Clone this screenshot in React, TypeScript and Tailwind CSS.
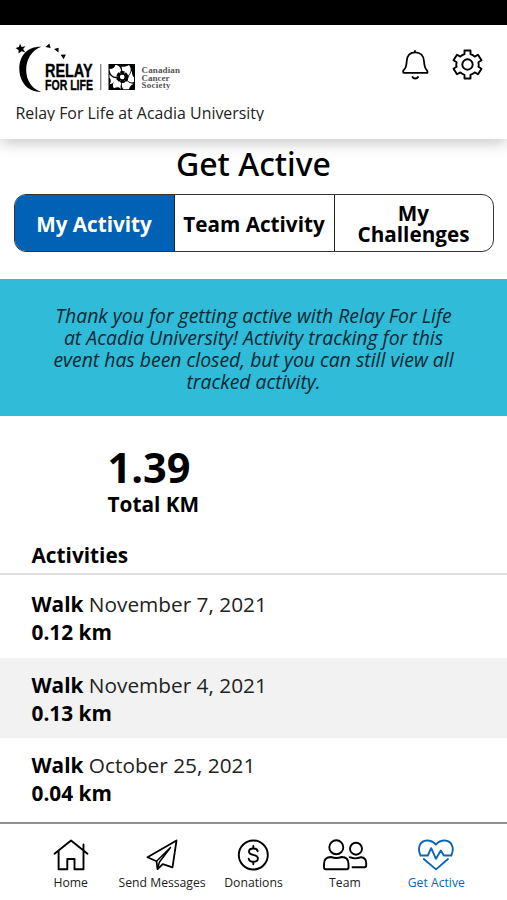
import React from "react";

function Logo() {
  return (
    <svg className="block h-[54px] w-[170px]" viewBox="14 40 170 54" role="img" aria-label="Relay For Life, Canadian Cancer Society">
      <path d="M20 43.8 21.6 47l3.9-.7-2.4 2.8 2.2 3.2-3.9-1.1-2.8 2.4-.1-3.5-3-2 3.400-1z" />
      <path d="M41.3 46.7C29 46 19.3 54.500 19.300 68.500C19.300 82.500 28.500 92.500 41.300 91.700C32 89 26.200 80.500 26.200 70C26.200 59 32 50 41.300 46.700Z" />
      <path d="M45.500 47 49.300 43.600 50.600 48zM54 49 58.600 47.700 58.500 52.500zM60.600 54.800 65.900 54.600 63.600 59.300z" />
      <g fontFamily="Liberation Sans, Arial, sans-serif" fontWeight="700" stroke="black" strokeWidth=".35">
        <text x="45" y="77.300" fontSize="18.500" textLength="47.500" lengthAdjust="spacingAndGlyphs">RELAY</text>
        <text x="45" y="90.300" fontSize="15" textLength="48" lengthAdjust="spacingAndGlyphs">FOR LIFE</text>
      </g>
      <path d="M100.800 64v26" stroke="#333" strokeWidth=".8" />
      <rect x="108.500" y="64" width="26.500" height="26" />
      <g fill="white">
        <path d="M109.500 69C113 69 114.500 67.500 115.500 65C118.500 65 121 67.500 121.200 71.300L118 76.500C114 77.800 109.800 75 109.500 69Z" />
        <path d="M121.500 66.800C124 66.600 126.500 66.600 129 65C131.500 68 131.500 72.300 128 75.800L122.500 71.500Z" />
        <path d="M132 70.800C131.800 74 132.500 76 134 77.500V82C131.500 83 129.500 82.500 127.500 80.500L128.800 76.200Z" />
        <path d="M133.800 83.700C131 85 129.500 86.500 129 89.200H123.500C121.800 87.500 121.300 85.500 122.200 82.800L127 81Q130 84.200 133.800 83.700Z" />
        <path d="M120.800 89.200C119.500 86.800 117 86.800 114 88.300C112 85.500 113 81.800 116.500 79.300L121.500 82.500Q120 86 120.800 89.200Z" />
        <path d="M109.500 84.200C111.500 82 111 79.500 109.500 77.500V74.500Q113 78.800 117 78C115.500 81 113.500 83.800 109.500 84.200Z" />
      </g>
      <circle cx="122.300" cy="77" r="4.300" fill="white" stroke="black" strokeWidth="3.400" strokeDasharray="3.700 .8" />
      <circle cx="122.300" cy="77" r="3.200" fill="none" stroke="black" strokeWidth="1.500" />
      <g fontFamily="Liberation Serif, Times New Roman, serif" fontWeight="700" fontSize="9" fill="#555">
        <text x="141.500" y="72.700" textLength="38.500">Canadian</text>
        <text x="141.500" y="80.500" textLength="28">Cancer</text>
        <text x="141.500" y="88" textLength="29">Society</text>
      </g>
    </svg>
  );
}

function BellIcon() {
  return (
    <svg className="h-8 w-7" viewBox="401 48 28 32" fill="none" stroke="black" strokeWidth="1.800" strokeLinecap="round" strokeLinejoin="round">
      <path d="M415 51v1.200M403.500 72.800H427.300Q428 71 426.200 69.400C424.600 67.500 424.300 65 424 61.200C423.700 55.600 420.300 52.300 415.300 52.300S407 55.600 406.700 61.200C406.500 65 406 67.500 404.300 69.400Q402.500 71 403.500 72.800ZM412.500 77C413.500 79 417 79 418 77" />
    </svg>
  );
}

function GearIcon() {
  return (
    <svg className="h-8 w-8" viewBox="452 48 32 32" fill="none" stroke="black" strokeWidth="1.900" strokeLinejoin="round">
      <path d="M464.500 50.500H470.500V54.200Q473 55 474.700 56.600L478 54.700L481.500 60.300L478.400 62.200Q479 64.500 478.400 66.800L481.500 68.700L478 74.300L474.700 72.400Q473 74 470.500 74.800V78.500H464.500V74.800Q462 74 460.300 72.400L457 74.300L453.500 68.700L456.600 66.800Q456 64.500 456.600 62.200L453.500 60.300L457 54.700L460.300 56.600Q462 55 464.500 54.200Z" />
      <circle cx="467.500" cy="64.500" r="5.200" />
    </svg>
  );
}

function HomeIcon() {
  return (
    <svg className="h-8 w-9" viewBox="53 839 36 32" fill="none" stroke="black" strokeWidth="1.900" strokeLinecap="round" strokeLinejoin="round">
      <path d="M54.500 853.700 71 840.500 87.500 853.700M58.600 851V869.200H67.300V859H74.500V869.200H83.500V844.500" />
    </svg>
  );
}

function SendIcon() {
  return (
    <svg className="h-8 w-9" viewBox="144.500 839 36 32" fill="none" stroke="black" strokeWidth="1.800" strokeLinecap="round" strokeLinejoin="round">
      <path d="M177 840.500 148 857.300 157 861.300 158 869.200 163.300 864.200 173 867.300Z" />
      <path d="M171 847.500 157 861.300M171 847.500 159.800 862.300 158 869.200" strokeWidth="1.500" />
    </svg>
  );
}

function DollarIcon() {
  return (
    <svg className="h-8 w-9" viewBox="235.500 839 36 32" fill="none" stroke="black" strokeWidth="1.900" strokeLinecap="round">
      <circle cx="253.800" cy="855" r="14.500" />
      <path d="M253.800 846v2.500M253.800 861.700v2.500M258.200 851.200C257.800 849.400 256.200 848.500 253.800 848.500C251 848.500 249.500 849.800 249.500 851.700C249.500 856 258.400 853.800 258.400 858.400C258.400 860.500 256.600 861.700 253.800 861.700C251.200 861.700 249.500 860.600 249.200 858.600" />
    </svg>
  );
}

function TeamIcon() {
  return (
    <svg className="h-8 w-12" viewBox="321 839 48 32" fill="none" stroke="black" strokeWidth="1.900" strokeLinecap="round" strokeLinejoin="round">
      <circle cx="336.300" cy="847.300" r="7" />
      <circle cx="356" cy="848.700" r="6" />
      <path d="M331 857C334.500 858.300 338 858.300 341.800 857C346.500 857 348.500 860 348.500 864V867.500Q348.500 869.200 346.800 869.200H325.700Q324 869.200 324 867.500V864C324 860 326.200 857 331 857ZM349.700 857.200C353 858.600 357.500 858.600 361 857.200C364.500 857.500 366.200 859.700 366.200 863V865.500Q366.200 867.200 364.500 867.200H352.500" />
    </svg>
  );
}

function HeartIcon() {
  return (
    <svg className="h-8 w-9" viewBox="418.500 839 36 32" fill="none" stroke="currentColor" strokeWidth="1.900" strokeLinecap="round" strokeLinejoin="round">
      <path d="M421 855.500C417.600 848 420.300 840.800 427.300 840.500C431.800 840.300 434 842 436.300 844.500C438.700 842 441 840.300 445.300 840.500C452.300 840.800 455.300 848 451.800 855.500H444.300L441.300 850.500 436.500 858.800 431.700 848.200 428.300 855.500ZM424.300 859 436.500 869.400 448.500 859" />
    </svg>
  );
}

const activities = [
  { date: "November 7, 2021", km: "0.12 km" },
  { date: "November 4, 2021", km: "0.13 km" },
  { date: "October 25, 2021", km: "0.04 km" },
];

const tabs = [
  { label: "Home", icon: <HomeIcon /> },
  { label: "Send Messages", icon: <SendIcon /> },
  { label: "Donations", icon: <DollarIcon /> },
  { label: "Team", icon: <TeamIcon /> },
  { label: "Get Active", icon: <HeartIcon />, active: true },
];

export default function App() {
  return (
    <div className="flex h-[900px] w-full flex-col overflow-hidden bg-white font-['Open_Sans',sans-serif] text-black">
      <div className="h-[25px] shrink-0 bg-black" />
      <header className="z-10 h-[114px] shrink-0 bg-white pt-[15px] shadow-[0_4px_14px_rgba(0,0,0,0.22)]">
        <div className="flex h-[54px] justify-between pr-[23.5px] pl-[14px]">
          <Logo />
          <div className="flex gap-[22.500px] pt-2">
            <BellIcon />
            <GearIcon />
          </div>
        </div>
        <p className="mt-[7px] h-[20px] overflow-hidden pl-[15.500px] text-[15.900px] leading-[24px] text-[#222]">Relay For Life at Acadia University</p>
      </header>

      <main className="flex min-h-0 flex-1 flex-col">
        <h1 className="mt-[5px] h-[40px] text-center font-['Noto_Sans',sans-serif] text-[32px] leading-[40px] font-medium">Get Active</h1>
        <div className="mx-[13.500px] mt-[10px] grid h-[58px] shrink-0 grid-cols-[160px_160px_1fr] overflow-hidden rounded-[12px] border border-[#333] text-center text-[20.700px] leading-[21px] font-bold">
          <button className="border-r border-[#222] bg-[#0061b5] pt-[2px] text-white">My Activity</button>
          <button className="border-r border-[#222] pt-[2px] whitespace-nowrap">Team Activity</button>
          <button className="pt-[2px]">My<br />Challenges</button>
        </div>
        <p className="mt-[27px] h-[137px] shrink-0 bg-[#30bbd9] pt-[26px] text-center text-[19.400px] leading-[22px] text-[#082832] italic">
          Thank you for getting active with Relay For Life<br />
          at Acadia University! Activity tracking for this<br />
          event has been closed, but you can still view all<br />
          tracked activity.
        </p>
        <section className="h-[124px] shrink-0 pt-[28px] pl-[107.500px] font-bold">
          <p className="text-[41.500px] leading-[46px]">1.39</p>
          <p className="pt-[1px] text-[20.800px] leading-[27px]">Total KM</p>
        </section>
        <h2 className="h-[35px] shrink-0 border-b-2 border-[#dedede] pl-[31.500px] text-[20.800px] leading-[31px] font-bold">Activities</h2>
        <ul className="pt-[2px] text-[20.800px] leading-[28px]">
          {activities.map((a) => (
            <li key={a.date} className="h-[80.600px] pt-[13px] pl-[31.500px] even:bg-[#f2f2f2]">
              <p className="text-[#222]"><strong className="text-black">Walk</strong> {a.date}</p>
              <p className="font-bold">{a.km}</p>
            </li>
          ))}
        </ul>
      </main>

      <nav className="grid h-[78px] shrink-0 grid-cols-5 border-t-2 border-[#909090] bg-white px-[25px] pt-[15px]">
        {tabs.map((t) => (
          <div key={t.label} className={t.active ? "flex flex-col items-center text-[#0c66b6]" : "flex flex-col items-center text-[#222]"}>
            {t.icon}
            <span className="mt-[3px] text-[12.200px] leading-[17px] whitespace-nowrap">{t.label}</span>
          </div>
        ))}
      </nav>
    </div>
  );
}
